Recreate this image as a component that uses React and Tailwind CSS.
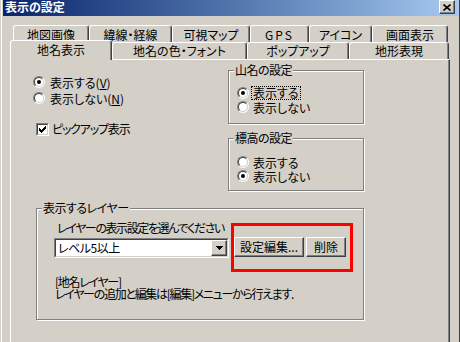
import React from 'react';

const raised = 'border border-t-white border-l-white border-r-[#404040] border-b-[#404040] shadow-[inset_-1px_-1px_0_#808080]';
const sunkenOuter = 'border border-t-[#808080] border-l-[#808080] border-r-white border-b-white';
const sunkenInner = 'border border-t-[#404040] border-l-[#404040] border-r-[#d4d0c8] border-b-[#d4d0c8]';

const Radio = ({ checked }) => (
  <span className={`w-[12px] h-[12px] rounded-full shrink-0 flex ${sunkenOuter}`}>
    <span className={`flex-1 rounded-full bg-white flex items-center justify-center ${sunkenInner}`}>
      {checked && <span className="w-[4px] h-[4px] rounded-full bg-black" />}
    </span>
  </span>
);

const Checkbox = () => (
  <span className={`w-[13px] h-[13px] shrink-0 flex ${sunkenOuter}`}>
    <span className={`flex-1 bg-white flex items-center justify-center ${sunkenInner}`}>
      <svg width="7" height="7" viewBox="0 0 7 7" shapeRendering="crispEdges">
        <polygon points="0,2 2,4 7,-1 7,2 2,7 0,5" fill="#000" />
      </svg>
    </span>
  </span>
);

const Tab = ({ w, label, selected, tall }) => (
  <div
    className={`${w} ${tall ? 'h-[18px]' : ''} ${selected ? 'h-[20px] -mb-[1px] pb-[2px] relative z-10' : ''} ${!tall && !selected ? 'h-[17px]' : ''} shrink-0 bg-[#d4d0c8] border-l border-t border-r border-l-white border-t-white border-r-[#404040] rounded-t-[3px] shadow-[inset_-1px_0_0_#808080] flex items-center justify-center leading-[14px]`}
  >
    {label}
  </div>
);

const Group = ({ label, className, children }) => (
  <div className={`relative border border-[#808080] shadow-[inset_1px_1px_0_#fff,1px_1px_0_#fff] ${className}`}>
    <span className="absolute -top-[8px] left-[5px] px-[1px] bg-[#d4d0c8] leading-[14px] tracking-[-0.5px]">{label}</span>
    {children}
  </div>
);

const RadioRow = ({ checked, children, h, gap }) => (
  <div className={`flex items-center ${h} ${gap}`}>
    <Radio checked={checked} />
    <span className="leading-[13px]">{children}</span>
  </div>
);

export default function App() {
  return (
    <div className="w-[460px] h-[342px] overflow-hidden bg-[#d4d0c8] text-black text-[12px] font-['Noto_Sans_CJK_JP','Noto_Sans_CJK_SC',sans-serif] [font-feature-settings:'palt'] pl-[1px] flex">
      <div className="flex-1 border-l border-white pl-[1px] border-r border-r-[#404040] flex flex-col">
        {/* title bar */}
        <div className="h-[21px] bg-gradient-to-r from-[#0a246a] to-[#a6caf0] flex items-end justify-between pl-[2px] pr-[4px]">
          <span className="text-white font-bold leading-[14px] mb-[2px]">表示の設定</span>
          <div className={`w-[16px] h-[14px] mb-[2px] bg-[#d4d0c8] flex items-center justify-center ${raised}`}>
            <svg width="8" height="7" viewBox="0 0 8 7">
              <path d="M0.5 0.5 L7.5 6.5 M7.5 0.5 L0.5 6.5" stroke="#000" strokeWidth="1.6" />
            </svg>
          </div>
        </div>

        {/* tab rows */}
        <div className="flex ml-[10px] mt-[9px]">
          <Tab tall w="w-[76px]" label="地図画像" />
          <Tab tall w="w-[83px]" label="緯線・経線" />
          <Tab tall w="w-[78px]" label="可視マップ" />
          <Tab tall w="w-[59px]" label={<span className="tracking-[2px]">GPS</span>} />
          <Tab tall w="w-[63px]" label="アイコン" />
          <Tab tall w="w-[76px]" label="画面表示" />
        </div>
        <div className="flex items-end ml-[7px] -mt-[3px] h-[19px] relative z-10">
          <Tab selected w="w-[102px]" label="地名表示" />
          <Tab w="w-[135px]" label="地名の色・フォント" />
          <Tab w="w-[102px]" label="ポップアップ" />
          <Tab w="w-[100px]" label="地形表現" />
        </div>

        {/* panel */}
        <div className="ml-[7px] w-[440px] h-[300px] shrink-0 border-l border-t border-r border-l-white border-t-white border-r-[#404040] shadow-[inset_-1px_0_0_#808080]">
          <div className="flex">
            <div className="w-[217px] pl-[22px] pt-[14px]">
              <RadioRow checked h="h-[16px]" gap="gap-[5px]">
                表示する(<span className="underline underline-offset-1">V</span>)
              </RadioRow>
              <RadioRow h="h-[16px]" gap="gap-[5px]">
                表示しない(<span className="underline underline-offset-1">N</span>)
              </RadioRow>
              <div className="flex items-center h-[16px] mt-[15px] ml-[3px] gap-[3px]">
                <Checkbox />
                <span className="leading-[14px] tracking-[-1.2px]">ピックアップ表示</span>
              </div>
            </div>
            <div className="w-[136px] pt-[10px]">
              <Group label="山名の設定" className="h-[54px] pt-[15px] pl-[8px]">
                <div className="flex items-center h-[14px] gap-[3px]">
                  <Radio checked />
                  <span className="leading-[12px] px-[1px] outline outline-1 outline-dotted outline-black">表示する</span>
                </div>
                <RadioRow h="h-[14px]" gap="gap-[4px]">表示しない</RadioRow>
              </Group>
              <Group label="標高の設定" className="h-[53px] mt-[14px] pt-[16px] pl-[8px]">
                <RadioRow h="h-[14px]" gap="gap-[4px]">表示する</RadioRow>
                <RadioRow checked h="h-[14px]" gap="gap-[4px]">表示しない</RadioRow>
              </Group>
            </div>
          </div>

          <Group label="表示するレイヤー" className="ml-[25px] mt-[17px] w-[328px] h-[112px] pt-[12px] pl-[17px]">
            <div className="pl-[3px] leading-[14px] tracking-[-1.4px]">レイヤーの表示設定を選んでください</div>
            <div className="flex items-start mt-[2px] gap-[5px]">
              <div className={`w-[175px] h-[20px] mt-[1px] flex ${sunkenOuter}`}>
                <div className={`flex-1 flex bg-white ${sunkenInner}`}>
                  <span className="flex-1 pl-[2px] leading-[16px] tracking-[-0.5px]">レベル5以上</span>
                  <div className={`w-[16px] bg-[#d4d0c8] flex items-center justify-center ${raised}`}>
                    <svg width="7" height="4" viewBox="0 0 7 4" shapeRendering="crispEdges">
                      <polygon points="0,0 7,0 3.5,4" fill="#000" />
                    </svg>
                  </div>
                </div>
              </div>
              <div className="flex gap-[2px]">
                <div className={`w-[70px] h-[20px] flex items-center justify-center leading-[14px] ${raised}`}>設定編集...</div>
                <div className={`w-[40px] h-[20px] flex items-center justify-center leading-[14px] ${raised}`}>削除</div>
              </div>
            </div>
            <div className="mt-[18px] pl-[1px] leading-[12px] tracking-[-1.3px]">
              <div>[地名レイヤー]</div>
              <div>レイヤーの追加と編集は[編集]メニューから行えます.</div>
            </div>
            <div className="absolute left-[194px] top-[14px] w-[122px] h-[49px] border-[3px] border-[#ff0000]" />
          </Group>
        </div>
      </div>
    </div>
  );
}
